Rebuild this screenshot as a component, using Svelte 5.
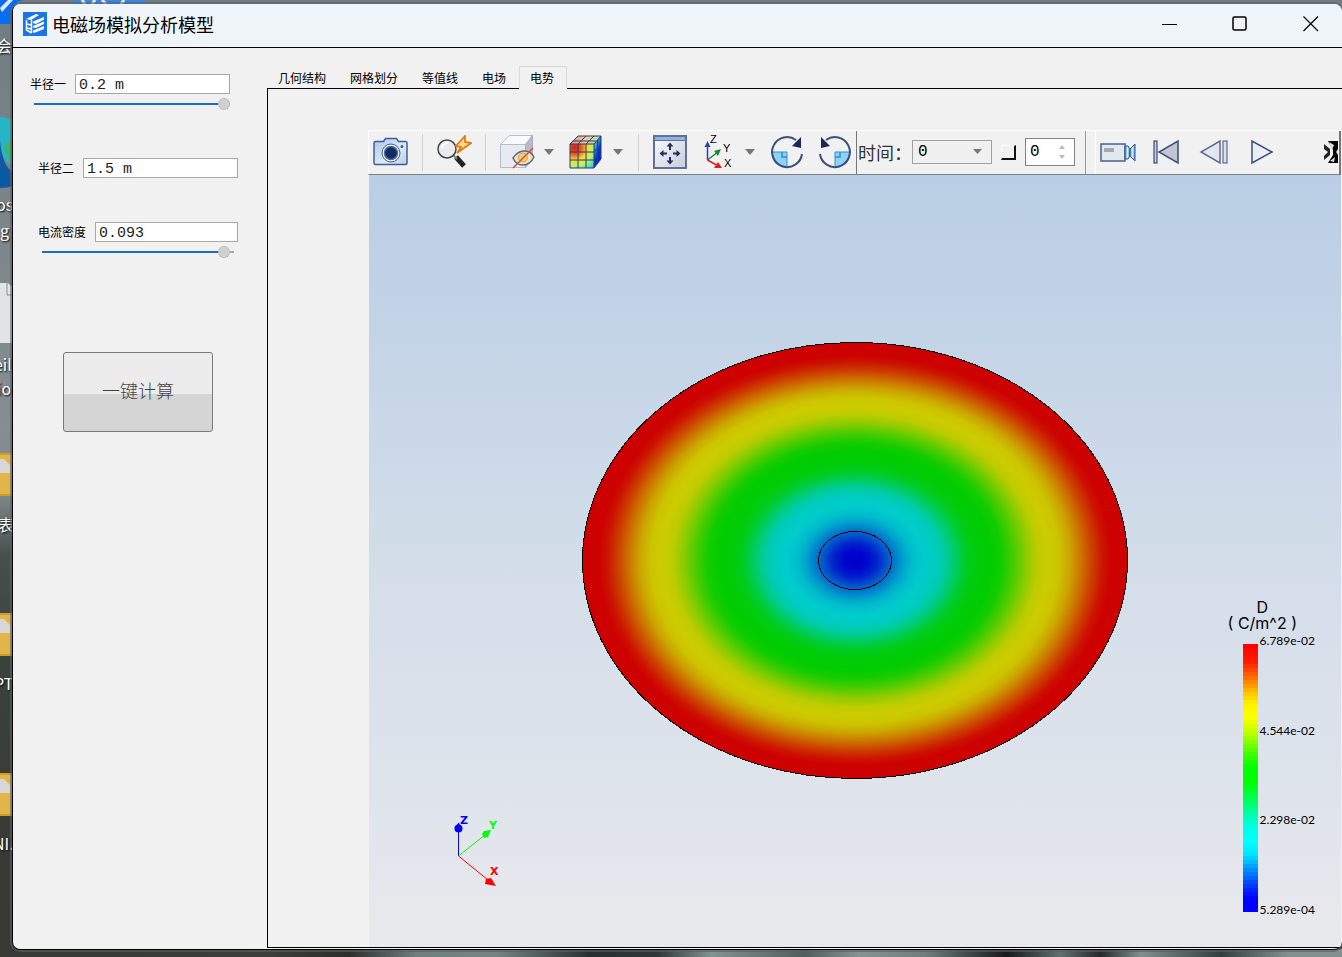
<script lang="ts">
  type Stop = [number, number[]];

  const tabs = ["几何结构", "网格划分", "等值线", "电场", "电势"];
  let activeTab = $state("电势");

  let radiusOne = $state("0.2 m");
  let radiusTwo = $state("1.5 m");
  let density = $state("0.093");
  let radiusSlider = $state(100);
  let densitySlider = $state(98);
  let step = $state(0);
  let loop = $state(false);

  const fieldStops: [number, string][] = [
    [0, "#0000cc"],
    [0.04, "#0004cc"],
    [0.08, "#0024cc"],
    [0.12, "#0058cc"],
    [0.15, "#0080cc"],
    [0.18, "#00a4cc"],
    [0.21, "#00bccc"],
    [0.25, "#00cccc"],
    [0.29, "#00ccc4"],
    [0.33, "#00cca4"],
    [0.37, "#00cc60"],
    [0.41, "#00cc24"],
    [0.45, "#00cc08"],
    [0.5, "#00cc00"],
    [0.54, "#14cc00"],
    [0.58, "#44cc00"],
    [0.63, "#8ccc00"],
    [0.67, "#bccc00"],
    [0.71, "#cccc00"],
    [0.75, "#ccc400"],
    [0.79, "#cca400"],
    [0.83, "#cc7400"],
    [0.87, "#cc4000"],
    [0.91, "#cc1400"],
    [0.94, "#cc0200"],
    [1, "#cc0000"],
  ];

  const legendStops: Stop[] = [
    [0, [255, 0, 0]],
    [0.06, [255, 30, 0]],
    [0.12, [255, 110, 0]],
    [0.18, [255, 200, 0]],
    [0.22, [255, 242, 0]],
    [0.27, [255, 255, 0]],
    [0.33, [190, 255, 0]],
    [0.4, [75, 255, 0]],
    [0.46, [0, 255, 0]],
    [0.52, [0, 255, 5]],
    [0.59, [0, 255, 100]],
    [0.67, [0, 255, 215]],
    [0.74, [0, 255, 255]],
    [0.79, [0, 230, 255]],
    [0.85, [0, 140, 255]],
    [0.92, [0, 40, 255]],
    [0.96, [0, 0, 255]],
    [1, [0, 0, 255]],
  ];

  function legendColor(t: number) {
    const i = Math.max(1, legendStops.findIndex(([pos]) => pos >= t));
    const [p0, c0] = legendStops[i - 1];
    const [p1, c1] = legendStops[i];
    const k = (t - p0) / (p1 - p0);
    return `rgb(${c0.map((c, n) => Math.round(c + (c1[n] - c) * k)).join(",")})`;
  }

  const bandCount = 67;
  const bands = Array.from({ length: bandCount }, (_, i) => legendColor(i / (bandCount - 1)));
  const legendValues = ["6.789e-02", "4.544e-02", "2.298e-02", "5.289e-04"];

  const desktopText = [
    { text: "会", x: -4, y: 34 },
    { text: "os", x: -4, y: 193 },
    { text: "g", x: 0, y: 219 },
    { text: "eil", x: -6, y: 353 },
    { text: "io", x: -3, y: 377 },
    { text: "表", x: -2, y: 513 },
    { text: "PT", x: -6, y: 672 },
    { text: "NI.", x: -7, y: 832 },
  ];
  const folders = [453, 613, 773];
</script>

<div class="desktop">
  <div class="wallpaper" aria-hidden="true">
    <svg class="shortcuts" width="160" height="360" viewBox="0 0 160 360">
      <path d="M0 0h24Q12 2 12 12v12H0z" fill="#0a6cf0" />
      <path d="M0 8l8-8h5L2 12z" fill="#dcebff" />
      <path d="M74 0h72v4H74z" fill="#3b84e0" />
      <path d="M82 0l3 4M95 0l-3 4M102 0l4 4M124 0l-3 4" stroke="#dfeafa" stroke-width="3" />
      <path d="M0 117q9 0 13 5v44q-8-2-13-18z" fill="#25b5c4" />
      <path d="M4 146l9-8v26q-7-5-9-18z" fill="#35b870" />
      <path d="M0 140q2 26 13 32v14q-6 2-13 2z" fill="#0c59a4" />
      <path d="M0 283h8l5 5v55H0z" fill="#e2e3e4" />
      <path d="M7 283v12h6" fill="none" stroke="#8a8d8f" />
    </svg>
    {#each folders as top}
      <svg class="folder" style="top: {top}px" width="12" height="43" viewBox="0 0 12 43">
        <path d="M0 0h12v43H0z" fill="#dfb54c" />
        <path d="M0 1h12M0 42h12" stroke="#d39c1c" stroke-width="2" />
        <path d="M0 6h4l6 6v8H0z" fill="#d8d8d8" />
      </svg>
    {/each}
    {#each desktopText as item}
      <span class="shortcut-name" style="left: {item.x}px; top: {item.y}px">{item.text}</span>
    {/each}
  </div>

  <div class="window">
    <header class="titlebar">
      <svg class="logo" width="24" height="24" viewBox="0 0 24 24">
        <rect width="24" height="24" fill="#1b74e8" />
        <path d="M3 7l10-5 3 1-8 5z" fill="#fff" />
        <path d="M3.500 8v10l5 3M4 12l4 1M4 16l4 1M8.500 8v13" fill="none" stroke="#fff" stroke-width="1.500" />
        <path d="M10 9.500L21 5v2.500L13 12l-3-1zM10 14l11-4.500V12l-8 4-3-.5zM10 18.500L21 14v3l-10 4-1-1z" fill="#fff" />
      </svg>
      <h1>电磁场模拟分析模型</h1>
      <div class="window-buttons">
        <button aria-label="最小化">
          <svg width="16" height="16" viewBox="0 0 16 16"><path d="M0 8.500h15" stroke="#000" /></svg>
        </button>
        <button aria-label="最大化">
          <svg width="16" height="16" viewBox="0 0 16 16"><rect x="1" y="1" width="13" height="13" rx="1.500" fill="none" stroke="#000" stroke-width="1.500" /></svg>
        </button>
        <button aria-label="关闭">
          <svg width="16" height="16" viewBox="0 0 16 16"><path d="M.5.5l14.500 14.500M15 .5L.5 15" stroke="#000" stroke-width="1.200" /></svg>
        </button>
      </div>
    </header>

    <div class="body">
      <aside class="params">
        <div class="param first">
          <div class="field">
            <label for="radius-one">半径一</label>
            <input id="radius-one" type="text" bind:value={radiusOne} />
          </div>
          <input type="range" aria-label="半径一" min="0" max="100" bind:value={radiusSlider} style="--fill: {radiusSlider}%" />
        </div>
        <div class="param second">
          <div class="field">
            <label for="radius-two">半径二</label>
            <input id="radius-two" type="text" bind:value={radiusTwo} />
          </div>
        </div>
        <div class="param third">
          <div class="field">
            <label for="density">电流密度</label>
            <input id="density" type="text" bind:value={density} />
          </div>
          <input type="range" aria-label="电流密度" min="0" max="100" bind:value={densitySlider} style="--fill: {densitySlider - 4}%" />
        </div>
        <button class="compute">一键计算</button>
      </aside>

      <main>
        <div class="tabs" role="tablist">
          {#each tabs as tab}
            <button role="tab" aria-selected={tab === activeTab} class:active={tab === activeTab} onclick={() => (activeTab = tab)}>{tab}</button>
          {/each}
        </div>

        <section class="panel">
          <div class="toolbar">
            <div class="group view-tools">
              <button class="tool" aria-label="截图">
                <svg width="36" height="32" viewBox="0 0 36 32">
                  <defs>
                    <linearGradient id="cam" x1="0" y1="0" x2="1" y2="1">
                      <stop offset="0" stop-color="#a9c4e4" />
                      <stop offset=".6" stop-color="#dfeaf6" />
                      <stop offset="1" stop-color="#b5cce8" />
                    </linearGradient>
                  </defs>
                  <path d="M2.500 5.500h8l2-3h11l2 3h7q1.500 0 1.500 1.500v20q0 1.500-1.500 1.500h-30Q1 28.500 1 27V7q0-1.500 1.500-1.500z" fill="url(#cam)" stroke="#3f5f96" stroke-width="1.500" />
                  <circle cx="18" cy="17" r="9" fill="#eef4fb" stroke="#3f5f96" />
                  <circle cx="18" cy="17" r="6.500" fill="#132b5e" stroke="#4b6aa0" stroke-width="1.500" />
                  <circle cx="29" cy="10.500" r="1.500" fill="#3f5f96" />
                </svg>
              </button>
              <span class="sep"></span>
              <button class="tool" aria-label="快速缩放">
                <svg width="36" height="34" viewBox="0 0 36 34">
                  <path d="M20 22l8 9" stroke="#222" stroke-width="5" />
                  <path d="M17 20l4 4" stroke="#888" stroke-width="2" />
                  <circle cx="11" cy="14" r="9" fill="#e9eaf0" stroke="#444" stroke-width="1.500" />
                  <path d="M6 13q1-5 6-5" fill="none" stroke="#fff" stroke-width="2" />
                  <path d="M29 1L20 11l5 1-4 6 14-10-6-1z" fill="#ffe08a" stroke="#e87a10" stroke-width="1.800" />
                </svg>
              </button>
              <span class="sep"></span>
              <div class="split">
                <button class="tool" aria-label="隐藏">
                  <svg width="36" height="36" viewBox="0 0 36 36">
                    <path d="M1.500 10.500L10.500 1.500h23l-7 9z" fill="#fafbfd" stroke="#b9bdc9" />
                    <path d="M1.500 10.500h25v23h-25z" fill="#e8eaf1" stroke="#b9bdc9" />
                    <path d="M26.500 10.500l7-9v23l-7 9z" fill="#b9bcc8" stroke="#a9adba" />
                    <path d="M14 24q5-7 11-7 7 0 10 6-4 8-11 8-7 0-10-7z" fill="#f7e2b4" stroke="#55698c" stroke-width="1.500" />
                    <circle cx="24" cy="23.500" r="4.500" fill="#f4cd7c" stroke="#c9a45a" />
                    <path d="M34 14L14 34" stroke="#d8482c" stroke-width="1.500" />
                  </svg>
                </button>
                <button class="drop" aria-label="隐藏选项"><svg width="10" height="6" viewBox="0 0 10 6"><path d="M0 0h10L5 6z" fill="#777" /></svg></button>
              </div>
              <div class="split">
                <button class="tool" aria-label="云图">
                  <svg width="36" height="36" viewBox="0 0 36 36">
                    <defs>
                      <radialGradient id="front" cx=".2" cy=".15" r="1.150">
                        <stop offset="0" stop-color="#dc1c10" />
                        <stop offset=".25" stop-color="#ee5a28" />
                        <stop offset=".45" stop-color="#f8d83c" />
                        <stop offset=".65" stop-color="#c8f060" />
                        <stop offset=".82" stop-color="#60e8b0" />
                        <stop offset="1" stop-color="#30a8f0" />
                      </radialGradient>
                      <linearGradient id="side" x1="0" y1="0" x2=".6" y2="1">
                        <stop offset="0" stop-color="#70e0a8" />
                        <stop offset=".35" stop-color="#2898e8" />
                        <stop offset=".65" stop-color="#0830d0" />
                        <stop offset="1" stop-color="#0820a8" />
                      </linearGradient>
                      <linearGradient id="top">
                        <stop offset="0" stop-color="#e89078" />
                        <stop offset=".5" stop-color="#f4c8a0" />
                        <stop offset="1" stop-color="#a8e0a0" />
                      </linearGradient>
                    </defs>
                    <path d="M2 10L10 2h23l-7 8z" fill="url(#top)" />
                    <path d="M26 10l7-8v23l-7 9z" fill="url(#side)" />
                    <path d="M2 10h24v24H2z" fill="url(#front)" />
                    <path d="M2 10h24v24H2zM10 10v24M18 10v24M2 18h24M2 26h24M2 10L10 2h23l-7 8M10 10l8-8M18 10l8-8M5 7h23M33 2v23l-7 9M26 18l7-8M26 26l7-8M29.500 6v24" fill="none" stroke="#283c68" />
                  </svg>
                </button>
                <button class="drop" aria-label="云图选项"><svg width="10" height="6" viewBox="0 0 10 6"><path d="M0 0h10L5 6z" fill="#777" /></svg></button>
              </div>
              <span class="sep"></span>
              <button class="tool" aria-label="适合窗口">
                <svg width="34" height="34" viewBox="0 0 34 34">
                  <defs>
                    <linearGradient id="fit" x1="0" y1="0" x2="1" y2="1">
                      <stop offset="0" stop-color="#fafbfd" />
                      <stop offset="1" stop-color="#c6ccdb" />
                    </linearGradient>
                  </defs>
                  <rect x="1" y="1" width="32" height="32" fill="url(#fit)" stroke="#5d719a" stroke-width="2" />
                  <path d="M2 2h30v3H2z" fill="#93b3dc" />
                  <path d="M1 5.500h32" stroke="#5d719a" />
                  <path d="M17 10v5M17 22v5M9 18.500h5M20 18.500h5" stroke="#1b315f" stroke-width="2" />
                  <path d="M17 7.500l3.500 4h-7zM17 29.500l3.500-4h-7zM6.500 18.500l4-3.500v7zM27.500 18.500l-4-3.500v7z" fill="#1b315f" />
                </svg>
              </button>
              <div class="split">
                <button class="tool" aria-label="视角">
                  <svg width="30" height="36" viewBox="0 0 30 36">
                    <path d="M4.500 26V11" stroke="#2848a8" stroke-width="1.500" />
                    <path d="M4.500 7l3 6h-6z" fill="#2848a8" />
                    <path d="M4.500 26l9-7" stroke="#188838" stroke-width="1.500" />
                    <path d="M18 15l-3 7-4-5z" fill="#188838" />
                    <path d="M4.500 26l9 5" stroke="#e02020" stroke-width="1.500" />
                    <path d="M19 34h-8l4-6z" fill="#e02020" />
                    <text x="7" y="9">Z</text>
                    <text x="20" y="18">Y</text>
                    <text x="21" y="33">X</text>
                  </svg>
                </button>
                <button class="drop" aria-label="视角选项"><svg width="10" height="6" viewBox="0 0 10 6"><path d="M0 0h10L5 6z" fill="#777" /></svg></button>
              </div>
              <button class="tool" aria-label="顺时针旋转">
                <svg width="34" height="34" viewBox="0 0 34 34">
                  <path d="M2 17h15v15Q4 31 2 17z" fill="#8fd2f5" stroke="#2a92d0" />
                  <path d="M12 17v5h5" fill="none" stroke="#2a92d0" stroke-width="1.500" />
                  <path d="M32 19A15 15 0 1 1 26 5" fill="none" stroke="#39507f" stroke-width="2" />
                  <path d="M31 2v11l-9-2z" fill="#16295a" />
                </svg>
              </button>
              <button class="tool" aria-label="逆时针旋转">
                <svg width="34" height="34" viewBox="0 0 34 34">
                  <path d="M32 17H17v15q13-1 15-15z" fill="#8fd2f5" stroke="#2a92d0" />
                  <path d="M22 17v5h-5" fill="none" stroke="#2a92d0" stroke-width="1.500" />
                  <path d="M2 19A15 15 0 1 0 8 5" fill="none" stroke="#39507f" stroke-width="2" />
                  <path d="M3 2v11l9-2z" fill="#16295a" />
                </svg>
              </button>
            </div>

            <div class="group time-tools">
              <label for="time">时间：</label>
              <div class="combo">
                <select id="time">
                  <option>0</option>
                </select>
                <svg width="10" height="6" viewBox="0 0 10 6"><path d="M0 0h9L4.500 5z" fill="#777" /></svg>
              </div>
              <input class="loop" type="checkbox" aria-label="循环" bind:checked={loop} />
              <div class="spin">
                <input type="number" aria-label="步数" min="0" bind:value={step} />
                <div class="arrows">
                  <button aria-label="增加" onclick={() => step++}><svg width="6" height="4" viewBox="0 0 6 4"><path d="M3 0l3 4H0z" fill="#bbb" /></svg></button>
                  <button aria-label="减少" onclick={() => (step = Math.max(0, step - 1))}><svg width="6" height="4" viewBox="0 0 6 4"><path d="M0 0h6L3 4z" fill="#bbb" /></svg></button>
                </div>
              </div>
            </div>

            <div class="group play-tools">
              <button class="tool" aria-label="录制">
                <svg width="36" height="24" viewBox="0 0 36 24">
                  <defs>
                    <linearGradient id="lens">
                      <stop offset="0" stop-color="#4a90c4" />
                      <stop offset=".5" stop-color="#d4effc" />
                      <stop offset="1" stop-color="#4a90c4" />
                    </linearGradient>
                  </defs>
                  <rect x="1" y="4" width="24" height="17" fill="#e3e7ef" stroke="#4a618e" stroke-width="1.500" />
                  <rect x="4" y="8" width="10" height="4" fill="#a5a8ae" />
                  <path d="M25 6h3l2 3v7l-2 3h-3z" fill="url(#lens)" stroke="#31578a" />
                  <path d="M35 4v17l-5-5V9z" fill="url(#lens)" stroke="#31578a" />
                </svg>
              </button>
              <button class="tool" aria-label="第一帧">
                <svg width="28" height="26" viewBox="0 0 28 26">
                  <rect x="2" y="2" width="3" height="22" fill="#c9cedb" stroke="#354f80" stroke-width="1.200" />
                  <path d="M26 2v22L7 13z" fill="#c3c6cf" stroke="#354f80" stroke-width="1.500" />
                </svg>
              </button>
              <button class="tool" aria-label="上一帧">
                <svg width="30" height="26" viewBox="0 0 30 26">
                  <path d="M21 2v22L2 13z" fill="#e4e7ef" stroke="#5a6c94" stroke-width="1.500" />
                  <rect x="24" y="2" width="4" height="22" fill="#dfe2ea" stroke="#5a6c94" stroke-width="1.200" />
                </svg>
              </button>
              <button class="tool" aria-label="播放">
                <svg width="24" height="26" viewBox="0 0 24 26">
                  <path d="M2 2v22l20-11z" fill="#eceef3" stroke="#354f80" stroke-width="1.500" />
                </svg>
              </button>
              <button class="more" aria-label="更多">
                <svg width="14" height="22" viewBox="0 0 14 22">
                  <path d="M0 3l6 5v6l-6 5z" fill="#222" />
                  <path d="M0 8l4 3-4 4z" fill="#f1f1f1" />
                  <path d="M4 0h10v22H4l5-8V9z" fill="#000" />
                  <path d="M5 1l5 3-2 5zM14 8v6l-2-3zM6 20l5-4-1 5z" fill="#ddd" />
                </svg>
              </button>
            </div>
          </div>

          <div class="viewport">
            <svg class="field-plot" width="548" height="440" viewBox="0 0 548 440">
              <defs>
                <radialGradient id="field">
                  {#each fieldStops as [offset, color]}
                    <stop {offset} stop-color={color} />
                  {/each}
                </radialGradient>
              </defs>
              <g shape-rendering="crispEdges" stroke="#000">
                <ellipse cx="274" cy="219.500" rx="272.500" ry="218" fill="url(#field)" />
                <ellipse cx="274" cy="219.500" rx="36.500" ry="29" fill="none" />
              </g>
            </svg>

            <svg class="triad" width="60" height="80" viewBox="0 0 60 80">
              <path d="M9.500 46V20" stroke="#00f" />
              <circle cx="9.500" cy="18.500" r="4" fill="#00f" />
              <path d="M9.500 12.500l3 5h-6z" fill="#00f" />
              <path d="M9.500 46l30-24" stroke="#0f0" />
              <path d="M42 20l-3 7-4 1-2-4 2-3z" fill="#0f0" />
              <path d="M9.500 46l32 26" stroke="#f00" />
              <path d="M47 76l-11-2 1-5 5-1z" fill="#f00" />
              <text x="11" y="14" fill="#00f">Z</text>
              <text x="40" y="19" fill="#0f0">Y</text>
              <text x="41" y="65" fill="#f00">X</text>
            </svg>

            <div class="legend">
              <div class="legend-title">
                <span>D</span>
                <span>( C/m^2 )</span>
              </div>
              <div class="scale">
                <div class="bar">
                  {#each bands as color}
                    <span style="background: {color}"></span>
                  {/each}
                </div>
                <div class="values">
                  {#each legendValues as value}
                    <span>{value}</span>
                  {/each}
                </div>
              </div>
            </div>
          </div>
        </section>
      </main>
    </div>
  </div>
</div>

<style>
  :global(body) {
    margin: 0;
  }

  .desktop {
    position: relative;
    display: flex;
    box-sizing: border-box;
    min-height: 100vh;
    padding: 4px 0 7px 12px;
    overflow: hidden;
    background: linear-gradient(#717c82, #858e92 45%, #7c8588 52%, #46504c 58%, #3a433f 68%, #3a3a36 85%, #383834);
    font-family: "Noto Sans CJK SC", sans-serif;
    color: #000;
  }

  .wallpaper {
    position: absolute;
    inset: 0;
  }

  .wallpaper::after {
    content: "";
    position: absolute;
    left: 0;
    right: 0;
    bottom: 0;
    height: 8px;
    background: linear-gradient(90deg, #383834, #3c3e3a 20%, #2c2e2c 26%, #6d7f7e 31%, #738583 37%, #27302e 44%, #2f3836 49%, #809490 53%, #4f5e5c 60%, #839592 64%, #6d7f7c 69%, #151a19 75%, #5f716e 79%, #232a29 82%, #7e918e 85%, #32403c 91%, #82938f 96%);
  }

  .shortcuts,
  .folder,
  .shortcut-name {
    position: absolute;
    left: 0;
  }

  .shortcuts {
    top: 0;
  }

  .shortcut-name {
    font-size: 16px;
    line-height: 22px;
    color: #fff;
    text-shadow: 1px 1px 2px #000;
    white-space: nowrap;
  }

  .window {
    position: relative;
    display: flex;
    flex: 1;
    flex-direction: column;
    min-width: 0;
    overflow: hidden;
    border: 1px solid #000;
    border-width: 0 0 1px 1px;
    border-radius: 8px;
    background: #f1f1f1;
    box-shadow: 0 0 0 2px rgba(90, 96, 96, 0.6);
  }

  button {
    padding: 0;
    border: 0;
    background: none;
    font-family: inherit;
    color: inherit;
  }

  svg {
    display: block;
  }

  .titlebar {
    display: flex;
    align-items: center;
    box-sizing: border-box;
    height: 44px;
    padding: 0 3px 3px 10px;
    border-bottom: 1px solid #000;
    background: #eff4f8;
  }

  h1 {
    flex: 1;
    margin: 0 0 0 5px;
    font-size: 18px;
    font-weight: 400;
    line-height: 24px;
  }

  .window-buttons {
    display: flex;
  }

  .window-buttons button {
    display: flex;
    align-items: center;
    justify-content: center;
    width: 70px;
    height: 38px;
  }

  .window-buttons button:last-child {
    width: 64px;
    padding-left: 8px;
  }

  .body {
    display: flex;
    flex: 1;
  }

  .params {
    display: flex;
    flex-direction: column;
    width: 254px;
    box-sizing: border-box;
    padding: 26px 33px 0 17px;
  }

  .param {
    display: flex;
    flex-direction: column;
    gap: 4px;
  }

  .first {
    height: 84px;
    margin-right: 4px;
  }

  .second {
    height: 64px;
  }

  .third {
    height: 130px;
  }

  .second,
  .third {
    margin-left: 8px;
    margin-right: -4px;
  }

  .field {
    display: flex;
    align-items: center;
    gap: 9px;
  }

  .field label {
    font-size: 12px;
    line-height: 20px;
    white-space: nowrap;
  }

  .field input {
    flex: 1;
    min-width: 0;
    height: 20px;
    box-sizing: border-box;
    padding: 2px 3px 0;
    border: 1px solid #a8a8a8;
    background: #fff;
    font-family: "Liberation Mono", monospace;
    font-size: 15px;
    color: #222;
  }

  input[type="range"] {
    appearance: none;
    height: 12px;
    margin: 0 4px;
    background: linear-gradient(90deg, #1670bd var(--fill), #aaa var(--fill)) center / 100% 2px no-repeat;
  }

  .first input[type="range"] {
    margin-right: 0;
  }

  input[type="range"]::-webkit-slider-thumb {
    appearance: none;
    width: 12px;
    height: 12px;
    box-sizing: border-box;
    border: 1px dotted #aaa;
    border-radius: 50%;
    background: #d0d0d0;
  }

  .compute {
    width: 150px;
    height: 80px;
    margin-left: 33px;
    padding-bottom: 4px;
    border: 1px solid #7a7a7a;
    border-radius: 3px;
    background: linear-gradient(#ececec 53%, #d5d5d5 53%);
    font-size: 18px;
    font-weight: 300;
    color: #444;
  }

  main {
    display: flex;
    flex: 1;
    flex-direction: column;
    min-width: 0;
    padding: 18px 0 1px;
  }

  .tabs {
    display: flex;
    height: 22px;
  }

  .tabs button {
    height: 22px;
    padding: 1px 12px 0 10px;
    border: 1px solid transparent;
    font-size: 12px;
    line-height: 16px;
  }

  .tabs .active {
    position: relative;
    height: 23px;
    border-color: #d9d9d9;
    border-bottom-color: #f1f1f1;
    background: #f1f1f1;
  }

  .panel {
    display: flex;
    flex: 1;
    flex-direction: column;
    padding: 41px 1px 0 101px;
    border: 1px solid #000;
    border-right: 0;
  }

  .toolbar {
    display: flex;
    height: 45px;
    border-top: 1px solid #fff;
    border-left: 1px solid #fff;
    border-bottom: 1px solid #7f7f7f;
    margin-left: -1px;
    box-sizing: border-box;
  }

  .group {
    display: flex;
    align-items: center;
    padding-bottom: 1px;
  }

  .tool {
    display: flex;
    flex: none;
    align-items: center;
    justify-content: center;
    width: 42px;
    height: 40px;
  }

  .tool text {
    font-family: "Liberation Sans", sans-serif;
    font-size: 11px;
  }

  .split {
    display: flex;
    align-items: center;
    gap: 3px;
    margin-right: 2px;
  }

  .drop {
    display: flex;
    align-items: center;
    justify-content: center;
    width: 16px;
    height: 40px;
  }

  .tool + .tool,
  .split + .split,
  .tool + .split,
  .split + .tool {
    margin-left: 6px;
  }

  .sep {
    width: 1px;
    height: 37px;
    margin: 0 10px;
    background: #cfcfcf;
  }

  .view-tools {
    padding-left: 1px;
    border-right: 1px solid #777;
  }

  .time-tools {
    padding-left: 1px;
    padding-right: 10px;
    border-right: 1px solid #999;
  }

  .time-tools label {
    width: 54px;
    font-size: 18px;
    line-height: 24px;
    white-space: nowrap;
    color: #333;
  }

  .combo {
    position: relative;
    margin-right: 9px;
  }

  .combo select {
    display: block;
    appearance: none;
    width: 80px;
    height: 24px;
    padding: 0 5px;
    border: 1px solid #a0a0a0;
    border-radius: 0;
    background: #f0f0f0;
    font-family: "Liberation Mono", monospace;
    font-size: 16px;
    color: #000;
  }

  .combo svg {
    position: absolute;
    top: 9px;
    right: 9px;
    pointer-events: none;
  }

  .loop {
    appearance: none;
    width: 15px;
    height: 15px;
    margin: 0 9px 0 0;
    border: 1px solid #fff;
    border-right: 2px solid #111;
    border-bottom: 2px solid #111;
    background: #f1f1f1;
  }

  .spin {
    display: flex;
    box-sizing: border-box;
    width: 50px;
    height: 28px;
    border: 1px solid #858585;
    background: #fff;
  }

  .spin input {
    appearance: textfield;
    flex: 1;
    min-width: 0;
    padding: 0 0 0 4px;
    border: 0;
    background: none;
    font-family: "Liberation Mono", monospace;
    font-size: 16px;
  }

  .spin input::-webkit-inner-spin-button {
    display: none;
  }

  .arrows {
    display: flex;
    flex-direction: column;
    justify-content: center;
    gap: 6px;
    width: 15px;
  }

  .play-tools {
    flex: 1;
    margin-left: 9px;
    padding-left: 1px;
    border-left: 1px solid #fff;
    border-right: 2px solid #777;
  }

  .more {
    margin-left: auto;
    margin-right: 1px;
  }

  .viewport {
    position: relative;
    display: flex;
    flex: 1;
    align-items: center;
    justify-content: center;
    background: linear-gradient(#b9cee5, #d3dde9 50%, #dfe4ec 80%, #e8e9ec);
  }

  .triad {
    position: absolute;
    left: 80px;
    bottom: 57px;
  }

  .triad text {
    font-family: "DejaVu Sans", sans-serif;
    font-size: 11px;
    font-weight: 700;
  }

  .legend {
    position: absolute;
    right: 26px;
    bottom: 35px;
    display: flex;
    flex-direction: column;
    align-items: flex-end;
    font-family: Lato, sans-serif;
  }

  .legend-title {
    display: flex;
    flex-direction: column;
    align-items: center;
    margin-right: 18px;
    padding-bottom: 13px;
    font-family: Inter, sans-serif;
    font-size: 16px;
    line-height: 16px;
  }

  .scale {
    display: flex;
    gap: 2px;
  }

  .bar {
    width: 15px;
  }

  .bar span {
    display: block;
    height: 4px;
  }

  .values {
    display: flex;
    flex-direction: column;
    justify-content: space-between;
    margin: -11px 0 -6px;
    font-size: 12px;
    line-height: 16px;
  }
</style>
